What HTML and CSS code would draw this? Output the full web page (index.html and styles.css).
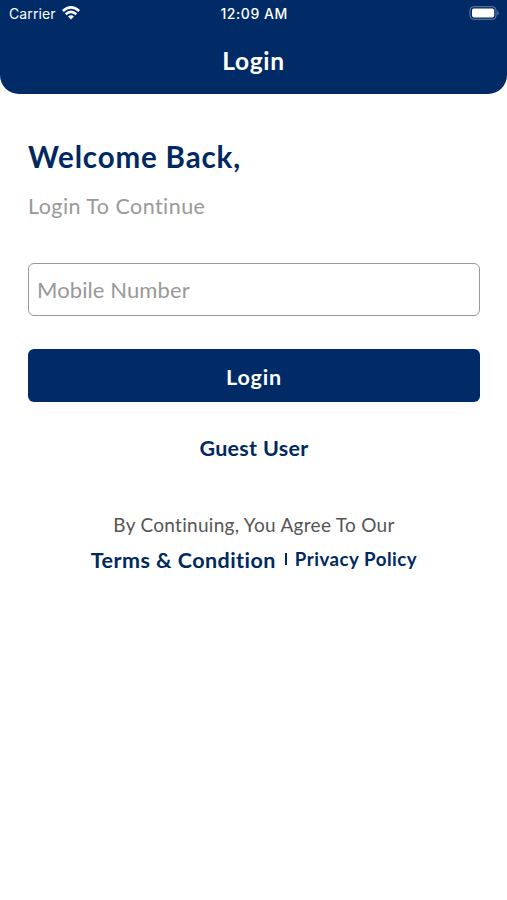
FILE: index.html
```html
<!DOCTYPE html>
<html lang="en">
<head>
<meta charset="utf-8">
<title>Login</title>
<link rel="stylesheet" href="styles.css">
</head>
<body>
<header class="header">
  <div class="status">
    <div class="carrier"><span>Carrier</span>
      <svg class="wifi" width="18" height="14" viewBox="0 0 18 14" fill="none" stroke="#fff" stroke-width="2.6"><path d="M.8 5Q9-2.2 17.2 5M3.7 8.2Q9 3.5 14.3 8.2"/><path d="M6 10.4Q9 7.9 12 10.4L9 13.4Z" fill="#fff" stroke="none"/></svg>
    </div>
    <span class="clock">12:09 AM</span>
    <svg class="battery" width="31" height="14" viewBox="0 0 31 14"><rect x="1" y=".7" width="26" height="12.6" rx="3.5" fill="none" stroke="#6d82a7"/><rect x="3" y="2.6" width="22.2" height="8.8" rx="1.8" fill="#fff"/><path d="M28.3 4.7q2.8 2.3 0 4.6z" fill="#6d82a7"/></svg>
  </div>
  <h1 class="title">Login</h1>
</header>
<main class="content">
  <h2 class="welcome">Welcome Back,</h2>
  <p class="subtitle">Login To Continue</p>
  <input class="field" type="tel" placeholder="Mobile Number" aria-label="Mobile Number">
  <button class="button" type="button">Login</button>
  <a class="guest">Guest User</a>
  <p class="agree">By Continuing, You Agree To Our</p>
  <div class="links"><a class="terms">Terms &amp; Condition</a><span class="divider"></span><a class="privacy">Privacy Policy</a></div>
</main>
</body>
</html>
```
FILE: styles.css
```css
* { box-sizing: border-box; }
body { margin: 0; background: #fff; font-family: Lato, sans-serif; font-variant-ligatures: none; color: #002861; }
svg { display: block; }
h1, h2, p { margin: 0; white-space: nowrap; }
.header { height: 94px; background: #002b66; border-radius: 0 0 19px 19px; color: #fff; }
.status { height: 28px; display: grid; grid-template-columns: 1fr 68px 1fr; align-items: center; padding: 0 7px 2px 9px; font: 14px Inter, sans-serif; white-space: nowrap; }
.carrier { display: flex; align-items: center; gap: 5px; }
.carrier span { width: 48px; letter-spacing: .1px; }
.clock { font-weight: 500; letter-spacing: .55px; }
.battery { justify-self: end; }
.title { margin-top: 15px; line-height: 35px; text-align: center; font-size: 24.5px; font-weight: 700; letter-spacing: .7px; }
.content { display: flex; flex-direction: column; padding: 45px 27px 0 28px; }
.welcome { line-height: 36px; font-size: 29.5px; font-weight: 700; letter-spacing: .85px; }
.subtitle { margin-top: 17px; line-height: 28px; font-size: 21.5px; color: #999; letter-spacing: .45px; }
.field { height: 53px; margin-top: 43px; border: 1px solid #999; border-radius: 6px; padding: 0 8px; font: 22px Lato, sans-serif; letter-spacing: .1px; color: #002861; }
.field::placeholder { color: #999; }
.button { height: 53px; margin-top: 33px; padding: 2px 0 0; border: 0; background: #002b66; border-radius: 6px; color: #fff; font: 700 21.5px Lato, sans-serif; letter-spacing: .8px; }
.guest { align-self: center; margin-top: 32px; line-height: 28px; font-size: 21.5px; font-weight: 700; letter-spacing: .3px; }
.agree { align-self: center; margin-top: 50px; line-height: 26px; font-size: 19px; color: #555; letter-spacing: .3px; }
.links { align-self: center; margin-top: 8px; display: flex; font-weight: 700; white-space: nowrap; }
.terms { line-height: 28px; font-size: 21.5px; letter-spacing: .45px; }
.divider { width: 2px; height: 12px; margin: 7px 8px 0 9px; background: #002861; }
.privacy { line-height: 26px; font-size: 18.7px; letter-spacing: .5px; }
```
